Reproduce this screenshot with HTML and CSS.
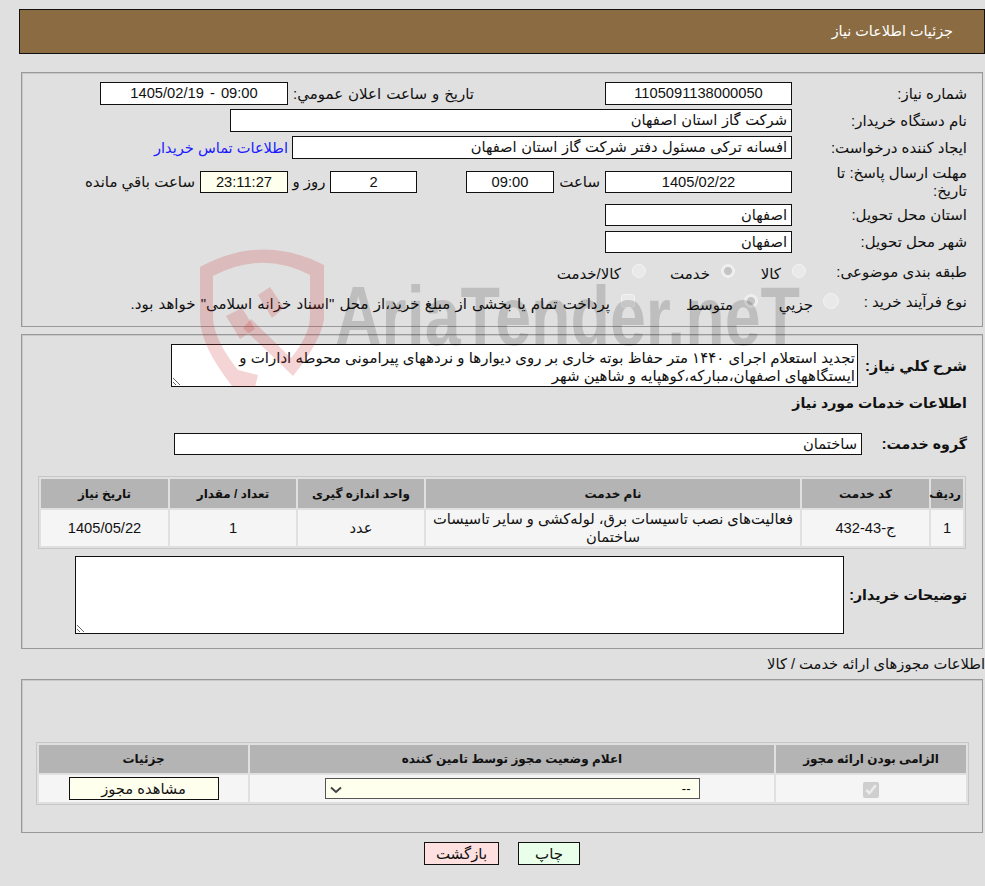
FILE: index.html
```html
<!DOCTYPE html>
<html lang="fa" dir="rtl">
<head>
<meta charset="utf-8">
<title>جزئیات اطلاعات نیاز</title>
<link rel="stylesheet" href="styles.css">
</head>
<body>
<header class="page-head">جزئیات اطلاعات نیاز</header>

<section class="panel panel-main">
  <div class="row">
    <div class="label">شماره نیاز:</div>
    <div class="field w-187 center">1105091138000050</div>
    <div class="label-public">تاریخ و ساعت اعلان عمومي:</div>
    <div class="field w-188 center date-span" dir="ltr">1405/02/19 - 09:00</div>
  </div>
  <div class="row">
    <div class="label">نام دستگاه خریدار:</div>
    <div class="field w-562">شرکت گاز استان اصفهان</div>
  </div>
  <div class="row">
    <div class="label">ایجاد کننده درخواست:</div>
    <div class="field w-500">افسانه ترکی مسئول دفتر شرکت گاز استان اصفهان</div>
    <a class="contact" href="#">اطلاعات تماس خریدار</a>
  </div>
  <div class="row row-deadline">
    <div class="label label-wrap">مهلت ارسال پاسخ: تا تاریخ:</div>
    <div class="field short w-187 center">1405/02/22</div>
    <div class="unit-hour">ساعت</div>
    <div class="field short w-88 center">09:00</div>
    <div class="field short w-87 center days">2</div>
    <div class="unit-day">روز و</div>
    <div class="field short w-88 center timer">23:11:27</div>
    <div class="unit-left">ساعت باقي مانده</div>
  </div>
  <div class="row row-short">
    <div class="label">استان محل تحویل:</div>
    <div class="field short w-187">اصفهان</div>
  </div>
  <div class="row row-short">
    <div class="label">شهر محل تحویل:</div>
    <div class="field short w-187">اصفهان</div>
  </div>
  <div class="row row-choice">
    <div class="label">طبقه بندی موضوعی:</div>
    <div class="choices">
      <label class="choice c-kala"><input type="radio" name="cat" disabled><span>کالا</span></label>
      <label class="choice c-khedmat"><input type="radio" name="cat" checked disabled><span>خدمت</span></label>
      <label class="choice c-both"><input type="radio" name="cat" disabled><span>کالا/خدمت</span></label>
    </div>
  </div>
  <div class="row row-choice row-process">
    <div class="label">نوع فرآیند خرید :</div>
    <div class="choices">
      <label class="choice c-minor"><input type="radio" name="proc" disabled><span>جزيي</span></label>
      <label class="choice c-medium"><input type="radio" name="proc" checked disabled><span>متوسط</span></label>
      <label class="choice c-pay"><input type="checkbox" disabled><span>پرداخت تمام یا بخشی از مبلغ خرید،از محل "اسناد خزانه اسلامی" خواهد بود.</span></label>
    </div>
  </div>
</section>

<section class="panel panel-service">
  <div class="row row-desc">
    <div class="label strong w-label-desc">شرح كلي نياز:</div>
    <textarea class="area area-desc" readonly>تجدید استعلام اجرای ۱۴۴۰ متر حفاظ بوته خاری بر روی دیوارها و نردههای پیرامونی محوطه ادارات و ایستگاههای اصفهان،مبارکه،کوهپایه و شاهین شهر</textarea>
  </div>
  <div class="section-title strong">اطلاعات خدمات مورد نياز</div>
  <div class="row row-group">
    <div class="label strong w-label-group">گروه خدمت:</div>
    <div class="field short w-688">ساختمان</div>
  </div>
  <table class="grid grid-service">
    <colgroup><col class="s1"><col class="s2"><col class="s3"><col class="s4"><col class="s5"><col class="s6"></colgroup>
    <thead><tr><th>ردیف</th><th>کد خدمت</th><th>نام خدمت</th><th>واحد اندازه گیری</th><th>تعداد / مقدار</th><th>تاریخ نیاز</th></tr></thead>
    <tbody><tr><td>1</td><td>ج-43-432</td><td>فعالیت‌های نصب تاسیسات برق، لوله‌کشی و سایر تاسیسات ساختمان</td><td>عدد</td><td>1</td><td>1405/05/22</td></tr></tbody>
  </table>
  <div class="row row-buyer">
    <div class="label strong w-label-buyer">توضیحات خریدار:</div>
    <textarea class="area area-buyer" readonly></textarea>
  </div>
</section>

<h2 class="license-title">اطلاعات مجوزهای ارائه خدمت / کالا</h2>

<section class="panel panel-license">
  <table class="grid grid-license">
    <colgroup><col class="l1"><col class="l2"><col class="l3"></colgroup>
    <thead><tr><th>الزامی بودن ارائه مجوز</th><th>اعلام وضعیت مجوز توسط تامین کننده</th><th>جزئیات</th></tr></thead>
    <tbody><tr>
      <td><input class="req" type="checkbox" checked disabled></td>
      <td><select class="status"><option>--</option></select></td>
      <td><button class="view" type="button">مشاهده مجوز</button></td>
    </tr></tbody>
  </table>
</section>

<div class="actions">
  <button class="btn btn-print" type="button">چاپ</button>
  <button class="btn btn-back" type="button">بازگشت</button>
</div>

<svg class="watermark" viewBox="0 0 985 886" aria-hidden="true">
  <g class="wm-shield">
    <path d="M200 267 Q262 233 324 265 V318 Q322 340 293 376 L243 328 L251 319 L291 358 Q310 335 310 316 V275 Q262 250 213 276 V318 Q214 340 238 370 L258 375 L255 387 L232 386 Q200 345 200 318 Z"/>
    <path d="M226 316 L242 308 L255 329 L240 339 Z"/>
    <path d="M258 295 L270 287 L284 308 L272 318 Z"/>
  </g>
  <text class="wm-text" x="335" y="345" textLength="465" lengthAdjust="spacingAndGlyphs">AriaTender.neT</text>
</svg>
</body>
</html>
```

FILE: styles.css
```css
* { box-sizing: border-box; }
html, body { margin: 0; padding: 0; }
body {
  position: relative;
  height: 886px;
  overflow: hidden;
  background: #e0e0e0;
  color: #111;
  font-family: "Liberation Sans", "DejaVu Sans", sans-serif;
  font-size: 15px;
}
.page-head {
  margin: 9px 0 0 0;
  margin-inline-end: 19px;
  height: 45px;
  line-height: 43px;
  padding-inline-start: 31px;
  background: #8b6c42;
  border: 1px solid #111;
  color: #fff;
  font-size: 14.4px;
}
.panel {
  margin-inline-start: 2px;
  margin-inline-end: 21px;
  border: 1px solid #999;
  box-shadow: inset 1px 1px 0 #c8c8c8;
}
.panel-main { margin-top: 18px; height: 255px; padding-top: 9px; }
.panel-service { margin-top: 7px; height: 315px; padding-top: 9px; }
.panel-license { height: 154px; padding-top: 62px; }

.row {
  display: flex;
  align-items: center;
  min-height: 23px;
  margin-bottom: 4px;
  padding-inline-start: 15px;
}
.label { width: 175px; flex: none; }
.label-wrap { line-height: 18px; padding-inline-end: 10px; }
.strong { font-size: 14.2px; font-weight: bold; }
.field {
  flex: none;
  height: 23px;
  line-height: 21px;
  padding: 0 4px;
  background: #fff;
  border: 1px solid #111;
  font-size: 14.7px;
  word-spacing: 0.5px;
  white-space: nowrap;
  overflow: hidden;
}
.field.short { height: 22px; line-height: 20px; }
.center { text-align: center; }
.date-span { word-spacing: 2px; }
.w-187 { width: 187px; }
.w-188 { width: 188px; }
.w-562 { width: 562px; }
.w-500 { width: 500px; }
.w-88 { width: 88px; }
.w-87 { width: 87px; }
.w-688 { width: 688px; }
.label-public { width: 317px; flex: none; padding-inline-start: 131px; word-spacing: 0.8px; }
.contact { margin-inline-start: 4px; color: #1a1aff; font-size: 14.6px; text-decoration: none; }
.row-deadline { height: 37px; }
.unit-hour { width: 51px; flex: none; padding-inline-start: 5px; }
.days { margin-inline-start: 49px; }
.unit-day { width: 42px; flex: none; text-align: center; }
.timer { background: #ffffee; }
.unit-left { margin-inline-start: 5px; }
.row-short { height: 22px; min-height: 22px; margin-bottom: 5px; }
.row-choice { height: 27px; margin-bottom: 3px; }

.choices { display: flex; align-items: center; flex: 1; }
.choice { display: flex; align-items: center; flex: none; white-space: nowrap; }
.choice input {
  appearance: none;
  flex: none;
  width: 14px;
  height: 14px;
  margin: 0 0 1px 0;
  background: #e9e9e9;
  border: 1px solid #f3f3f3;
  border-radius: 50%;
}
.choice input[type="checkbox"] { border-radius: 3px; }
.choice input:checked { background: radial-gradient(circle, #c4c4c4 0 3.5px, #eeeeee 4.5px); }
.choice span { margin-inline-start: 11px; margin-top: 4px; }
.c-kala { margin-inline-start: -14px; width: 71px; }
.c-khedmat { width: 89px; }
.c-both { width: 120px; }
.c-minor { margin-inline-start: -46px; width: 80px; }
.c-medium { width: 123px; }
.c-minor span, .c-medium span { margin-top: 6px; }
.c-minor input { width: 16px; height: 16px; margin-inline-start: -1px; margin-inline-end: -1px; }
.c-pay span { word-spacing: 1px; }

.row-desc { height: 43px; margin-bottom: 0; }
.w-label-desc { width: 109px; font-size: 14.7px; }
.w-label-group { width: 105px; }
.w-label-buyer { width: 123px; }
.area {
  display: block;
  flex: none;
  margin: 0;
  padding: 4px 2px 2px;
  background: #fff;
  color: #111;
  border: 1px solid #111;
  font: inherit;
  line-height: 18px;
  outline: none;
  resize: both;
}
.area-desc { width: 687px; height: 43px; overflow: hidden; }
.area-buyer { width: 769px; height: 78px; }
.section-title { margin: 6px 15px 0 0; height: 20px; line-height: 20px; }
.row-group { margin: 20px 0 0; min-height: 22px; }

.grid {
  border-collapse: separate;
  border-spacing: 2px;
  table-layout: fixed;
  border: 1px solid #c6c6c6;
  background: #e0e0e0;
}
.grid th, .grid td { padding: 0 2px; text-align: center; vertical-align: middle; }
.grid th { background: #b4b4b4; font-size: 12px; font-weight: bold; }
.grid td { background: #f5f5f5; font-size: 14.7px; line-height: 18px; }
.grid-service { width: 928px; margin: 21px 16px 0 0; }
.grid-service thead tr { height: 29px; }
.grid-service tbody tr { height: 36px; }
.s1 { width: 32px; } .s2 { width: 127px; } .s3 { width: 374px; }
.s4 { width: 126px; } .s5 { width: 126px; } .s6 { width: 127px; }
.row-buyer { margin: 7px 0 0; }

.license-title {
  margin: 0;
  height: 30px;
  line-height: 30px;
  font-size: 14.7px;
  font-weight: normal;
}
.grid-license { width: 933px; margin: 0 13px 0 0; }
.grid-license thead tr { height: 28px; }
.grid-license tbody tr { height: 27px; }
.grid-license td { padding: 0; }
.l1 { width: 190px; } .l2 { width: 524px; } .l3 { width: 209px; }
.req { width: 16px; height: 16px; margin: 0; vertical-align: middle; }
.status {
  appearance: none;
  display: block;
  width: 375px;
  height: 21px;
  margin: 0 auto;
  padding: 0 8px 0 0;
  background: #ffffee url("data:image/svg+xml,%3Csvg xmlns='http://www.w3.org/2000/svg' width='12' height='8'%3E%3Cpath d='M1 1.5 L6 6 L11 1.5' fill='none' stroke='%23444' stroke-width='2'/%3E%3C/svg%3E") no-repeat 4px 7px;
  border: 1px solid #555;
  border-radius: 0;
  font: inherit;
  font-size: 13px;
}
.view {
  display: block;
  width: 150px;
  height: 23px;
  margin: 0 auto;
  padding: 0;
  background: #ffffee;
  border: 1px solid #111;
  color: #111;
  font: inherit;
}
.actions {
  display: flex;
  justify-content: center;
  gap: 19px;
  margin: 9px 0 0;
  margin-inline-end: 19px;
}
.btn {
  height: 23px;
  padding: 0;
  border: 1px solid #111;
  color: #111;
  font: inherit;
}
.btn-print { width: 62px; background: #eaffea; }
.btn-back { width: 75px; background: #ffe0e0; }

.watermark {
  position: absolute;
  top: 0;
  left: 0;
  width: 985px;
  height: 886px;
  direction: ltr;
  pointer-events: none;
}
.wm-shield path { fill: rgba(200, 40, 40, 0.2); }
.wm-text {
  fill: rgba(0, 0, 0, 0.15);
  font-family: "Liberation Sans", sans-serif;
  font-size: 84px;
  font-weight: bold;
}
```
